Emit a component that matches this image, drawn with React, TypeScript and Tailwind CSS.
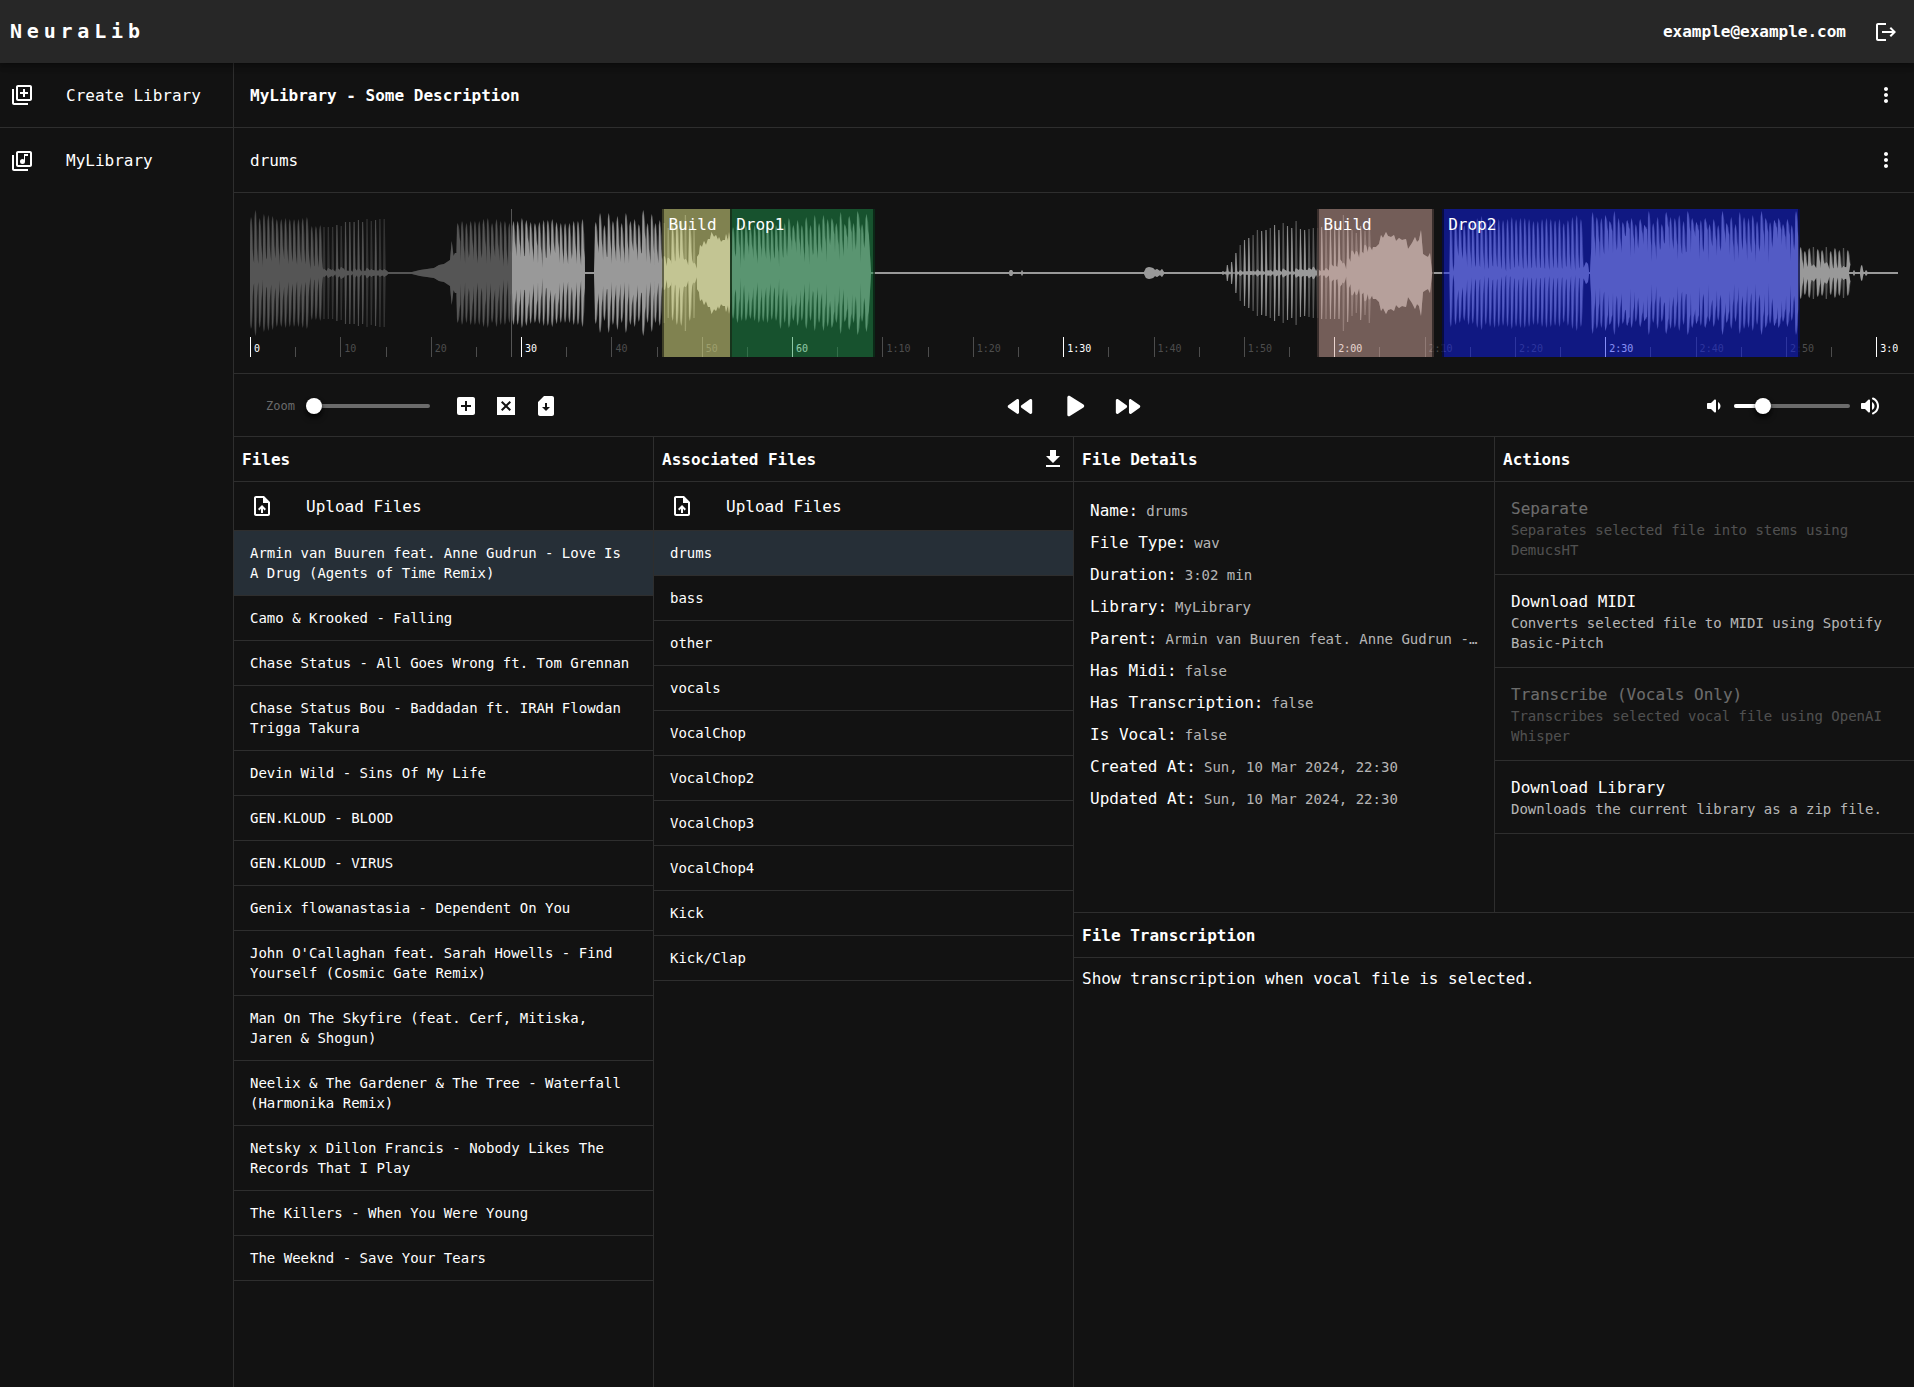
import { useState } from "react";
import type { ReactNode } from "react";
import {
  MdAddBox,
  MdFileDownload,
  MdLogout,
  MdMoreVert,
  MdOutlineLibraryAdd,
  MdOutlineLibraryMusic,
  MdOutlineUploadFile,
  MdSimCardDownload,
} from "react-icons/md";

/* ---------- data ---------- */

const files = [
  "Armin van Buuren feat. Anne Gudrun - Love Is A Drug (Agents of Time Remix)",
  "Camo & Krooked - Falling",
  "Chase Status - All Goes Wrong ft. Tom Grennan",
  "Chase Status Bou - Baddadan ft. IRAH Flowdan Trigga Takura",
  "Devin Wild - Sins Of My Life",
  "GEN.KLOUD - BLOOD",
  "GEN.KLOUD - VIRUS",
  "Genix flowanastasia - Dependent On You",
  "John O'Callaghan feat. Sarah Howells - Find Yourself (Cosmic Gate Remix)",
  "Man On The Skyfire (feat. Cerf, Mitiska, Jaren & Shogun)",
  "Neelix & The Gardener & The Tree - Waterfall (Harmonika Remix)",
  "Netsky x Dillon Francis - Nobody Likes The Records That I Play",
  "The Killers - When You Were Young",
  "The Weeknd - Save Your Tears",
];

const stems = [
  "drums",
  "bass",
  "other",
  "vocals",
  "VocalChop",
  "VocalChop2",
  "VocalChop3",
  "VocalChop4",
  "Kick",
  "Kick/Clap",
];

const details: [string, string][] = [
  ["Name:", "drums"],
  ["File Type:", "wav"],
  ["Duration:", "3:02 min"],
  ["Library:", "MyLibrary"],
  ["Parent:", "Armin van Buuren feat. Anne Gudrun - Love Is A Drug (Agents of Time Remix)"],
  ["Has Midi:", "false"],
  ["Has Transcription:", "false"],
  ["Is Vocal:", "false"],
  ["Created At:", "Sun, 10 Mar 2024, 22:30"],
  ["Updated At:", "Sun, 10 Mar 2024, 22:30"],
];

const actions = [
  { title: "Separate", text: "Separates selected file into stems using DemucsHT", disabled: true },
  { title: "Download MIDI", text: "Converts selected file to MIDI using Spotify Basic-Pitch", disabled: false },
  { title: "Transcribe (Vocals Only)", text: "Transcribes selected vocal file using OpenAI Whisper", disabled: true },
  { title: "Download Library", text: "Downloads the current library as a zip file.", disabled: false },
];

/* ---------- icons ---------- */

const paths = {
  play: "M8 6.82v10.36c0 .79.87 1.27 1.54.84l8.14-5.18c.62-.39.62-1.29 0-1.69L9.54 5.98C8.87 5.55 8 6.03 8 6.82z",
  forward:
    "m5.58 16.89 5.77-4.07c.56-.4.56-1.24 0-1.63L5.58 7.11C4.91 6.65 4 7.12 4 7.93v8.14c0 .81.91 1.28 1.58.82zM13 7.93v8.14c0 .81.91 1.28 1.58.82l5.77-4.07c.56-.4.56-1.24 0-1.63l-5.77-4.07c-.67-.47-1.58 0-1.58.81z",
  rewind:
    "M11 16.07V7.93c0-.81-.91-1.28-1.58-.82l-5.77 4.07c-.56.4-.56 1.24 0 1.63l5.77 4.07c.67.47 1.58 0 1.58-.81zm1.66-3.25 5.77 4.07c.66.47 1.58-.01 1.58-.82V7.93c0-.81-.91-1.28-1.58-.82l-5.77 4.07c-.57.4-.57 1.24 0 1.64z",
  volumeUp:
    "M3 10v4c0 .55.45 1 1 1h3l3.29 3.29c.63.63 1.71.18 1.71-.71V6.41c0-.89-1.08-1.34-1.71-.71L7 9H4c-.55 0-1 .45-1 1zm13.5 2c0-1.77-1.02-3.29-2.5-4.03v8.05c1.48-.73 2.5-2.25 2.5-4.02zM14 4.45v.2c0 .38.25.71.6.85C17.18 6.53 19 9.06 19 12s-1.82 5.47-4.4 6.5c-.36.14-.6.47-.6.85v.2c0 .63.63 1.07 1.21.85C18.6 19.11 21 15.84 21 12s-2.4-7.11-5.79-8.4c-.58-.23-1.21.22-1.21.85z",
  volumeDown:
    "M18.5 12c0-1.77-1.02-3.29-2.5-4.03v8.05c1.48-.73 2.5-2.25 2.5-4.02zM5 10v4c0 .55.45 1 1 1h3l3.29 3.29c.63.63 1.71.18 1.71-.71V6.41c0-.89-1.08-1.34-1.71-.71L9 9H6c-.55 0-1 .45-1 1z",
  closeBox:
    "M3 3v18h18V3H3zm14 12.59L15.59 17 12 13.41 8.41 17 7 15.59 10.59 12 7 8.41 8.41 7 12 10.59 15.59 7 17 8.41 13.41 12 17 15.59z",
};

function Glyph({ name, className = "size-6" }: { name: keyof typeof paths; className?: string }) {
  return (
    <svg viewBox="0 0 24 24" className={className} fill="currentColor" aria-hidden="true">
      <path d={paths[name]} />
    </svg>
  );
}

function IconButton({ label, children, className = "" }: { label: string; children: ReactNode; className?: string }) {
  return (
    <button type="button" aria-label={label} className={`shrink-0 cursor-pointer rounded-full p-2 ${className}`}>
      {children}
    </button>
  );
}

/* ---------- waveform ---------- */

type Piece =
  | { kind: "hits"; start: number; step: number; peaks: number[]; base: [number, number]; thin?: boolean }
  | { kind: "curve"; points: [number, number][] };

const repeat = (pattern: number[], count: number) => Array.from({ length: count }, (_, i) => pattern[i % pattern.length]);

// Positions run over 0..1648 and heights over 0..64; a negative peak is a faint hit.
const pieces: Piece[] = [
  { kind: "hits", start: 1, step: 4.3, base: [14, 12], peaks: [56, 63, 55, 59, 58, 57, 54, 54, 55, 54, 54, 54, 55, 56] },
  { kind: "hits", start: 61.7, step: 4.2, base: [8, 6], peaks: [47, 47, 48] },
  {
    kind: "hits",
    thin: true,
    start: 74,
    step: 4.3,
    base: [4, 3],
    peaks: [-46, -46, -46, 48, -47, 51, 51, 51, 53, 51, -54, -52, 53, -54, -54],
  },
  {
    kind: "curve",
    points: [[138, 1], [162, 1], [170, 3], [177, 4], [184, 5], [189, 8], [194, 9], [197, 11], [200, 13], [201.7, 32], [203.5, 17], [205, 20], [206.5, 20]],
  },
  { kind: "hits", start: 207.7, step: 4.29, base: [22, 14], peaks: [50, 52, 50, 52, 52, 52, 54, 55, 50, 54, 52, 52, 50] },
  {
    kind: "hits",
    start: 263.3,
    step: 4.31,
    base: [22, 16],
    peaks: [52, 52, 55, 53, 51, 50, 51, 53, 53, 54, 51, 50, 50, 50, 52, 52, 54],
  },
  { kind: "curve", points: [[335, 1], [344, 1]] },
  {
    kind: "hits",
    start: 345.7,
    step: 4.31,
    base: [18, 26],
    peaks: [51, 60, 48, 60, 52, 57, 50, 60, 52, 54, 49, 63, 50, 59],
  },
  { kind: "hits", start: 405.3, step: 4.3, base: [14, 10], peaks: [50, 53, -50, -45, 48, 52, 53, -58, 48, -45] },
  {
    kind: "curve",
    points: [[447, 16], [449, 19], [450, 28], [452, 26], [454, 32], [456, 28], [458, 34], [460, 34], [461.5, 41], [464, 36], [466, 38], [468, 33], [469, 36], [471, 31], [473, 33], [475, 33], [476, 39], [478, 32], [479, 41], [481, 26]],
  },
  {
    kind: "hits",
    start: 483,
    step: 4.3,
    base: [17, 34],
    peaks: [46, 50, 48, 48, 46, 48, 50, 49, 50, 47, 48, 56, 50, 55, 48, 53, 48, 56, 48, 58, 50, 58, 54, 55, 50, 61, 49, 57, 50, 62, 49, 59],
  },
  {
    kind: "curve",
    points: [[621, 1], [759, 1], [760, 3], [762, 3], [763, 1], [771, 1], [772, 3], [773, 1], [894, 1], [896, 5], [899, 6], [903, 5], [905, 3], [907, 4], [910, 2], [912, 4], [914, 1], [972, 1], [973, 2], [974, 1]],
  },
  {
    kind: "hits",
    thin: true,
    start: 977.3,
    step: 4.3,
    base: [1, 4],
    peaks: [8, 11, 20, -28, 33, 35, -38, -43, 42, 43, -45, 48, 43, -50, 47, 45, -52, 44, 43, -44, -45, -45],
  },
  {
    kind: "hits",
    thin: true,
    start: 1071.7,
    step: 4.33,
    base: [4, 24],
    peaks: [46, -46, 46, 46, 46, -58, 49, -43, -40, 47, -42, -50],
  },
  {
    kind: "curve",
    points: [[1123, 26], [1126, 26], [1129, 29], [1131, 38], [1133, 35], [1136, 41], [1138, 37], [1141, 36], [1144, 38], [1146, 32], [1149, 35], [1152, 33], [1156, 34], [1158, 24], [1162, 30], [1165, 36], [1167, 31], [1169, 33], [1171, 43], [1173, 19], [1176, 17], [1178, 16], [1180, 20], [1182, 1], [1198, 1]],
  },
  { kind: "hits", start: 1200.7, step: 4.33, base: [2, 2], peaks: [54] },
  { kind: "hits", start: 1205.4, step: 4.33, base: [16, 6], peaks: [52, 50, 48, 52, 51, 55, 57] },
  { kind: "hits", start: 1235.7, step: 4.33, base: [6, 7], peaks: repeat([52, 54, 55, 54, 53, 54, 56, 54, 55, 55, 54, 52], 18) },
  { kind: "hits", start: 1313.6, step: 4.33, base: [6, 6], peaks: [50, 53, 56, 58, 54] },
  { kind: "curve", points: [[1333, 5], [1334, 6], [1336, 11], [1338, 9], [1339, 1], [1340, 1]] },
  {
    kind: "hits",
    start: 1342.5,
    step: 4.33,
    base: [31, 31],
    peaks: repeat([61, 56, 55, 58, 52, 62, 55, 51, 53, 55, 49, 54, 48, 62, 50, 56, 49], 48),
  },
  { kind: "hits", start: 1550.5, step: 4.3, base: [8, 7], peaks: [26, 22, 25, -26, 24, 23, -26, 22, 25, 23, -25, 23] },
  {
    kind: "curve",
    points: [[1599, 1], [1603, 1], [1604, 3], [1605, 1], [1610, 1], [1611, 7], [1612, 8], [1613.5, 1], [1615, 1], [1616, 3], [1617.5, 1], [1648, 1]],
  },
];

// Repeatable pseudo-random value in 0..1.
const noise = (n: number) => {
  const v = Math.sin(n * 12.9898 + 4.1) * 43758.5453;
  return v - Math.floor(v);
};

function outline(halo: boolean) {
  const pts: [number, number][] = [];
  for (const p of pieces) {
    if (p.kind === "curve") {
      pts.push(...p.points);
      continue;
    }
    p.peaks.forEach((raw, i) => {
      const t = i / p.peaks.length;
      const x = p.start + p.step * i;
      const base = (p.base[0] + (p.base[1] - p.base[0]) * t) * (0.65 + 0.8 * noise(x));
      const valley = base * (0.35 + 0.6 * noise(x + 7));
      const faint = raw < 0;
      const peak = faint && !halo ? base + 1 : Math.abs(raw);
      const rise = peak - base;
      if (faint || p.thin) {
        const w = halo ? 0.6 : 0.3;
        pts.push([x - w - 0.5, base], [x - w, peak], [x + w, peak], [x + w + 0.9, base], [x + 2.8, valley]);
      } else if (halo) {
        pts.push([x - 1.3, valley], [x - 0.9, peak * 0.9], [x, peak], [x + 0.9, peak * 0.95], [x + 1.9, base + rise * 0.6], [x + 2.7, base]);
      } else {
        pts.push([x - 1.2, valley], [x - 0.5, base + rise * 0.8], [x, peak], [x + 0.6, base + rise * 0.8], [x + 1.5, base + rise * 0.25], [x + 2.5, base]);
      }
    });
  }
  const top = pts.map(([x, h]) => `${x.toFixed(1)} ${(64 - h).toFixed(1)}`);
  const bottom = pts.map(([x, h]) => `${x.toFixed(1)} ${(64 + h).toFixed(1)}`).reverse();
  return `M${top.join("L")}L${bottom.join("L")}Z`;
}

const core = outline(false);
const halo = outline(true);

const duration = 182.4;
const position = 28.9;
const percent = (seconds: number) => `${(seconds / duration) * 100}%`;

const regions = [
  { name: "Build", start: 45.65, end: 53.35, color: "bg-[#eef28e]/50" },
  { name: "Drop1", start: 53.15, end: 69.15, color: "bg-[#1c924a]/50" },
  { name: "Build", start: 118.15, end: 131, color: "bg-[#d4a89e]/50" },
  { name: "Drop2", start: 131.95, end: 171.55, color: "bg-[#0e1ef2]/50" },
];

const ticks = Array.from({ length: 37 }, (_, i) => i * 5);

function tickLabel(s: number) {
  return s <= 60 ? String(s) : `${Math.floor(s / 60)}:${String(s % 60).padStart(2, "0")}`;
}

function Waveform() {
  return (
    <div className="border-b border-[#2e2e2e] p-4">
      <div className="relative overflow-hidden">
        <svg viewBox="0 0 1648 128" preserveAspectRatio="none" className="block h-32 w-full" role="img" aria-label="Waveform">
          <defs>
            <linearGradient id="progress" gradientUnits="userSpaceOnUse" x1="0" x2="1648" y1="0" y2="0">
              <stop offset={position / duration} stopColor="#555" />
              <stop offset={position / duration} stopColor="#999" />
            </linearGradient>
          </defs>
          <path d={halo} fill="url(#progress)" opacity="0.5" />
          <path d={core} fill="url(#progress)" />
        </svg>
        <div className="relative h-5">
          {ticks.map((s) => {
            const major = s % 30 === 0;
            const labelled = s % 10 === 0;
            return (
              <div
                key={s}
                style={{ left: percent(s) }}
                className={`absolute bottom-0 border-l pl-[3px] text-[10px] leading-6 ${labelled ? "h-5" : "h-2.5"} ${
                  major ? "border-white text-white" : "border-[#4d4d4d] text-[#4d4d4d]"
                }`}
              >
                {labelled ? tickLabel(s) : null}
              </div>
            );
          })}
        </div>
        <div className="absolute inset-y-0 w-px bg-[#555]" style={{ left: percent(position) }} />
        {regions.map((r) => (
          <div
            key={r.start}
            style={{ left: percent(r.start), width: percent(r.end - r.start) }}
            className={`absolute inset-y-0 ${r.color}`}
          >
            <div className="h-full border-x-2 border-black/50 px-1 py-[3px]">{r.name}</div>
          </div>
        ))}
      </div>
    </div>
  );
}

/* ---------- controls ---------- */

function Slider({ label, initial }: { label: string; initial: number }) {
  const [value, setValue] = useState(initial);
  return (
    <div className="relative h-4 w-[116px]">
      <div className="absolute inset-x-0 top-1.5 h-1 rounded-full bg-[#6b6b6b]" />
      <div className="absolute left-0 top-1.5 h-1 rounded-full bg-white" style={{ width: `${value}%` }} />
      <input
        type="range"
        aria-label={label}
        min={0}
        max={100}
        value={value}
        onChange={(e) => setValue(Number(e.target.value))}
        className="absolute -left-2 top-0 h-4 w-[132px] cursor-pointer appearance-none bg-transparent [&::-webkit-slider-thumb]:size-4 [&::-webkit-slider-thumb]:appearance-none [&::-webkit-slider-thumb]:rounded-full [&::-webkit-slider-thumb]:bg-white [&::-webkit-slider-thumb]:shadow-md [&::-webkit-slider-thumb]:shadow-black"
      />
    </div>
  );
}

function Controls() {
  return (
    <div className="grid h-[63px] grid-cols-3 items-center border-b border-[#2e2e2e] px-8 pt-0.5">
      <div className="flex items-center">
        <span className="mr-[19px] text-xs text-[#6b6b6b]">Zoom</span>
        <Slider label="Zoom" initial={0} />
        <div className="ml-4 flex">
          <IconButton label="Add region">
            <MdAddBox className="size-6" />
          </IconButton>
          <IconButton label="Clear regions">
            <Glyph name="closeBox" />
          </IconButton>
          <IconButton label="Save regions">
            <MdSimCardDownload className="size-6" />
          </IconButton>
        </div>
      </div>
      <div className="flex items-center justify-center">
        <IconButton label="Rewind">
          <Glyph name="rewind" className="size-[35px]" />
        </IconButton>
        <IconButton label="Play">
          <Glyph name="play" className="size-10" />
        </IconButton>
        <IconButton label="Fast forward">
          <Glyph name="forward" className="size-[35px]" />
        </IconButton>
      </div>
      <div className="flex items-center justify-end gap-2">
        <Glyph name="volumeDown" />
        <Slider label="Volume" initial={25} />
        <Glyph name="volumeUp" />
      </div>
    </div>
  );
}

/* ---------- panels ---------- */

function PanelHeading({ children, action }: { children: ReactNode; action?: ReactNode }) {
  return (
    <div className="flex h-[45px] shrink-0 items-center justify-between border-b border-[#2e2e2e] px-2">
      <h2 className="font-bold">{children}</h2>
      {action}
    </div>
  );
}

function FileList({ title, items, action }: { title: string; items: string[]; action?: ReactNode }) {
  const [selected, setSelected] = useState(0);
  return (
    <section className="min-w-0 border-r border-[#2e2e2e]">
      <PanelHeading action={action}>{title}</PanelHeading>
      <button type="button" className="flex h-[49px] w-full cursor-pointer items-center gap-8 border-b border-[#2e2e2e] px-4 text-left">
        <MdOutlineUploadFile className="size-6" />
        Upload Files
      </button>
      <ul>
        {items.map((item, i) => (
          <li key={item}>
            <button
              type="button"
              aria-pressed={i === selected}
              onClick={() => setSelected(i)}
              className={`block w-full cursor-pointer border-b border-[#2e2e2e] px-4 py-3 text-left text-sm ${
                i === selected ? "bg-[#262f37]" : ""
              }`}
            >
              {item}
            </button>
          </li>
        ))}
      </ul>
    </section>
  );
}

function FileDetails() {
  return (
    <section className="min-w-0">
      <PanelHeading>File Details</PanelHeading>
      <dl className="flex flex-col gap-[7px] p-4">
        {details.map(([name, value]) => (
          <div key={name} className="flex items-baseline gap-2">
            <dt className="shrink-0">{name}</dt>
            <dd className="truncate text-sm text-white/70">{value}</dd>
          </div>
        ))}
      </dl>
    </section>
  );
}

function Actions() {
  return (
    <section className="min-w-0 border-l border-[#2e2e2e]">
      <PanelHeading>Actions</PanelHeading>
      <ul>
        {actions.map((a) => (
          <li key={a.title} className="border-b border-[#2e2e2e]">
            <button type="button" disabled={a.disabled} className="w-full px-4 pb-3.5 pt-4 text-left enabled:cursor-pointer disabled:opacity-[0.38]">
              <span className="block leading-[22px]">{a.title}</span>
              <span className="block text-sm text-white/70">{a.text}</span>
            </button>
          </li>
        ))}
      </ul>
    </section>
  );
}

/* ---------- page ---------- */

export default function App() {
  return (
    <div className='flex min-h-screen flex-col bg-[#121212] font-["DejaVu_Sans_Mono",monospace] text-base leading-[25px] text-white'>
      <header className="relative z-10 flex h-[63px] items-center justify-between bg-[#272727] pl-2.5 pr-2 shadow-[0_2px_4px_-1px_rgba(0,0,0,0.2),0_4px_5px_rgba(0,0,0,0.14),0_1px_10px_rgba(0,0,0,0.12)]">
        <h1 className="text-xl leading-[27px] font-bold tracking-[0.3rem]">NeuraLib</h1>
        <div className="flex items-center gap-5">
          <span className="font-bold">example@example.com</span>
          <IconButton label="Log out">
            <MdLogout className="size-6" />
          </IconButton>
        </div>
      </header>

      <div className="flex grow">
        <nav className="w-[234px] shrink-0 border-r border-[#2e2e2e]">
          <button type="button" className="flex h-[65px] w-full cursor-pointer items-center gap-8 border-b border-[#2e2e2e] px-2.5 text-left">
            <MdOutlineLibraryAdd className="size-6 shrink-0" />
            Create Library
          </button>
          <button type="button" className="flex h-[65px] w-full cursor-pointer items-center gap-8 px-2.5 text-left">
            <MdOutlineLibraryMusic className="size-6 shrink-0" />
            MyLibrary
          </button>
        </nav>

        <main className="flex min-w-0 grow flex-col">
          <div className="flex h-[65px] items-center justify-between border-b border-[#2e2e2e] pl-4 pr-2">
            <h2 className="font-bold">MyLibrary - Some Description</h2>
            <IconButton label="Library menu">
              <MdMoreVert className="size-6" />
            </IconButton>
          </div>
          <div className="flex h-[65px] items-center justify-between border-b border-[#2e2e2e] pl-4 pr-2">
            <h3>drums</h3>
            <IconButton label="File menu">
              <MdMoreVert className="size-6" />
            </IconButton>
          </div>

          <Waveform />
          <Controls />

          <div className="grid grow grid-cols-4">
            <FileList title="Files" items={files} />
            <FileList
              title="Associated Files"
              items={stems}
              action={
                <button type="button" aria-label="Download associated files" className="cursor-pointer">
                  <MdFileDownload className="size-6" />
                </button>
              }
            />
            <div className="col-span-2 grid grid-rows-2">
              <div className="grid grid-cols-2">
                <FileDetails />
                <Actions />
              </div>
              <section className="border-t border-[#2e2e2e]">
                <PanelHeading>File Transcription</PanelHeading>
                <p className="p-2">Show transcription when vocal file is selected.</p>
              </section>
            </div>
          </div>
        </main>
      </div>
    </div>
  );
}
